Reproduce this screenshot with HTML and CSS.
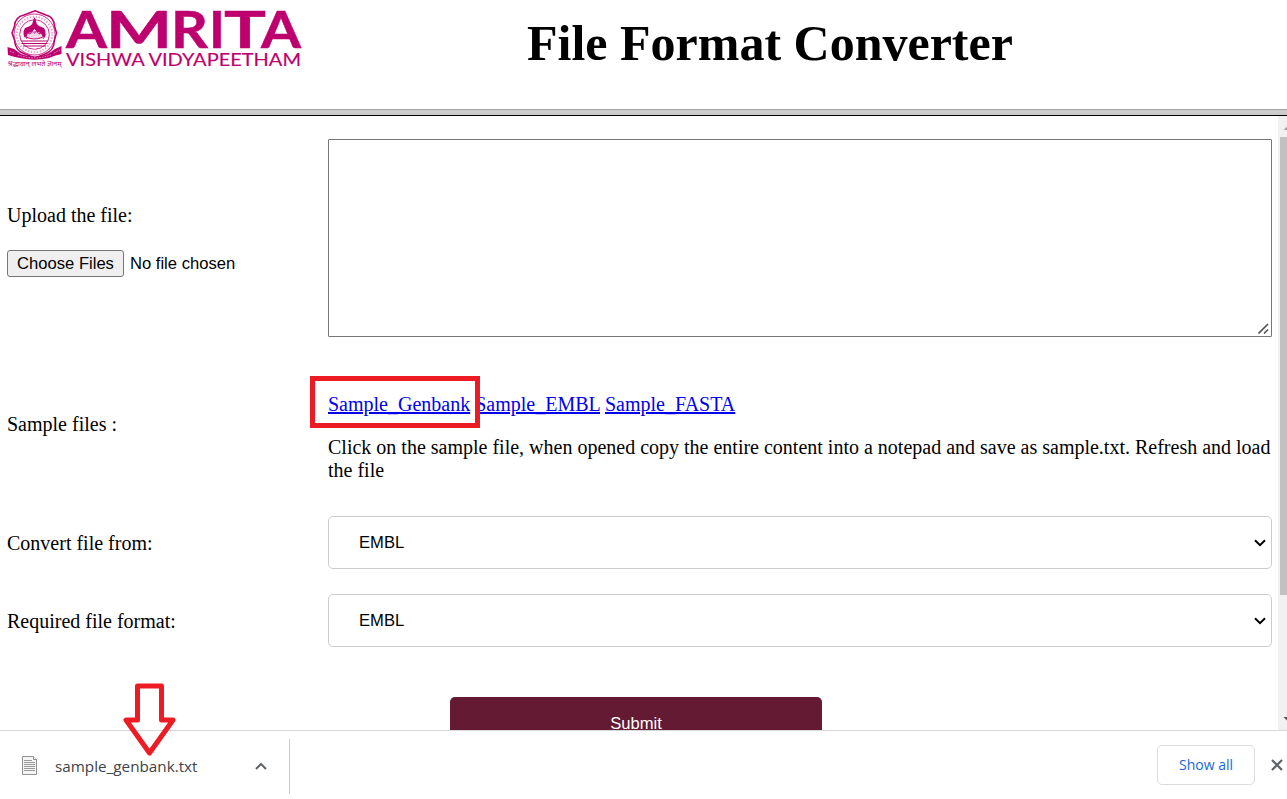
FILE: index.html
```html
<!DOCTYPE html>
<html lang="en">
<head>
<meta charset="utf-8">
<title>File Format Converter</title>
<link rel="stylesheet" href="styles.css">
</head>
<body>
<header class="header">
  <svg class="logo" width="303" height="74" viewBox="0 0 303 74" role="img" aria-label="Amrita Vishwa Vidyapeetham">
    <g fill="none" stroke="#bd006e">
      <path d="M35 10.800L46 15Q54 17 54.500 26L56.500 33L54.500 40Q54 51 45 54L35 58L25 54Q15 51 14.500 40L12 33L14.500 26Q15 17 24 15Z" stroke-width="1.500"/>
      <circle cx="34.500" cy="34.500" r="20.500" stroke-width=".8"/>
      <circle cx="34.500" cy="34.500" r="14.800" stroke-width=".8"/>
      <circle cx="34.500" cy="34.500" r="17.700" stroke-width="2" stroke-dasharray="1.300 1.700" opacity=".4"/>
      <path d="M21 41H48M21.500 43.500H47.500M23 46H46" stroke-width="1.200"/>
      <path d="M27 39L24 34M31 39L30 32M35 39V31M39 39L40 32M43 39L46 34" stroke-width=".8"/>
    </g>
    <path d="M34.500 17L36 21Q36 24 39 26L44 28Q47 33 44 38Q41 31 37 32L34.500 29L32 32Q28 31 25 38Q22 33 25 28L30 26Q33 24 33 21Z" fill="#bd006e"/>
    <path d="M26 37Q27 32 30 34Q32 30 34.500 33Q37 30 39 34Q42 32 43 37Q34.500 41 26 37Z" fill="#f5d5e7" stroke="#bd006e" stroke-width=".9"/>
    <path d="M7.500 47L14 49L21 54Q34.500 59 48 54L55 49L61.500 46V54L54 56L49 58Q34.500 61.500 20 58L15 57L8 55Z" fill="#bd006e"/>
    <path d="M18 55Q34.500 61 51 55M10 51L15 53M54 53L60 50" fill="none" stroke="#fff" stroke-width="1" stroke-dasharray="1.500 1.200" opacity=".55"/>
    <text class="logo-motto" x="7.500" y="66" textLength="54" lengthAdjust="spacingAndGlyphs">श्रद्धावान् लभते ज्ञानम्</text>
    <text class="logo-name" y="48"><tspan x="66" textLength="41" lengthAdjust="spacingAndGlyphs">A</tspan><tspan x="106" textLength="66" lengthAdjust="spacingAndGlyphs">M</tspan><tspan x="171" textLength="37" lengthAdjust="spacingAndGlyphs">R</tspan><tspan x="209" textLength="16" lengthAdjust="spacingAndGlyphs">I</tspan><tspan x="224" textLength="42" lengthAdjust="spacingAndGlyphs">T</tspan><tspan x="261" textLength="40" lengthAdjust="spacingAndGlyphs">A</tspan></text>
    <text class="logo-sub" x="66" y="66" textLength="235" lengthAdjust="spacingAndGlyphs">VISHWA VIDYAPEETHAM</text>
  </svg>
  <h1 class="title">File Format Converter</h1>
</header>
<div class="divider"></div>
<div class="viewport">
  <main class="form">
    <div class="upload">
      <div class="label">Upload the file:</div>
      <div class="file-row"><button class="file-btn">Choose Files</button><span>No file chosen</span></div>
    </div>
    <div class="textbox">
      <svg class="grip" width="11" height="11" viewBox="0 0 11 11"><path d="M.500 10.500L10 1M6 10.500L10 6.500" stroke="#555" stroke-width="1.700"/></svg>
    </div>
    <div class="label samples-label">Sample files :</div>
    <div class="samples">
      <div class="links"><a class="marked" href="#">Sample_Genbank</a> <a href="#">Sample_EMBL</a> <a href="#">Sample_FASTA</a></div>
      <p class="hint">Click on the sample file, when opened copy the entire content into a notepad and save as sample.txt. Refresh and load<br>the file</p>
    </div>
    <div class="label">Convert file from:</div>
    <div class="select"><span>EMBL</span><svg width="12" height="8" viewBox="0 0 12 8"><path d="M1 1.200L6 6.200L11 1.200" fill="none" stroke="#000" stroke-width="2"/></svg></div>
    <div class="label format-row">Required file format:</div>
    <div class="select format-row"><span>EMBL</span><svg width="12" height="8" viewBox="0 0 12 8"><path d="M1 1.200L6 6.200L11 1.200" fill="none" stroke="#000" stroke-width="2"/></svg></div>
    <button class="submit">Submit</button>
  </main>
  <div class="scrollbar">
    <svg width="9" height="21" viewBox="0 0 9 21"><path d="M5.500 14L9 10.500V14Z" fill="#a3a3a3"/></svg>
    <div class="thumb"></div>
    <svg class="scroll-down" width="9" height="17" viewBox="0 0 9 17"><path d="M5.500 4H9V7.500Z" fill="#505050"/></svg>
  </div>
</div>
<footer class="downloads">
  <div class="item">
    <svg class="file-icon" width="16" height="19" viewBox="0 0 16 19"><path d="M.500.500H11.500L14.500 3.500V18.500H.500Z" fill="#f5f5f5" stroke="#909090"/><path d="M11.500.500V3.500H14.500" fill="#fff" stroke="#909090"/><path d="M2 4.500H10M2 6.500H13M2 8.500H13M2 10.500H13M2 12.500H13M2 14.500H13" stroke="#999"/></svg>
    <span class="file-name">sample_genbank.txt</span>
    <svg class="chevron" width="12" height="8" viewBox="0 0 12 8"><path d="M1 7L6 2L11 7" fill="none" stroke="#5f6368" stroke-width="2"/></svg>
  </div>
  <button class="show-all">Show all</button>
  <svg class="close" width="12" height="12" viewBox="0 0 12 12"><path d="M1 1L11 11M11 1L1 11" stroke="#5f6368" stroke-width="2.200"/></svg>
</footer>
<svg class="arrow" width="54" height="75" viewBox="0 0 54 75"><path d="M14.500 3H38.500V37H50L26.500 70L3 37H14.500Z" fill="none" stroke="#ed1c24" stroke-width="5" stroke-linejoin="round"/></svg>
</body>
</html>
```

FILE: styles.css
```css
* { box-sizing: border-box; }
body { margin: 0; height: 799px; overflow: hidden; display: flex; flex-direction: column; background: #fff; color: #000; font-family: "Liberation Serif", serif; font-size: 20px; }
button { font-family: inherit; margin: 0; }
.header { height: 109px; flex: none; display: flex; align-items: flex-start; }
.logo { display: block; flex: none; overflow: visible; }
.logo-motto { font: 7px "Noto Sans", sans-serif; fill: #bd006e; }
.logo-name { font: 700 52px Lato, sans-serif; fill: #bd006e; stroke: #bd006e; stroke-width: .5px; }
.logo-sub { font: 17px Lato, sans-serif; fill: #bd006e; stroke: #bd006e; stroke-width: .15px; }
.title { margin: 15px 0 0 224px; font-size: 50px; line-height: 56px; white-space: nowrap; }
.divider { height: 7px; flex: none; background: #ccc; border-top: 1px solid #a5a5a5; border-bottom: 1px solid #000; }
.viewport { height: 614px; flex: none; display: flex; overflow: hidden; }
.form { width: 1278px; flex: none; padding: 23px 6px 0 7px; display: grid; grid-template-columns: 321px 944px; grid-template-rows: 198px 179px 53px 25px 53px 50px 53px; align-items: center; }
.format-row { grid-row: 5; }
.label { padding-top: 1px; line-height: 23px; white-space: nowrap; }
.upload { align-self: start; margin-top: 49px; padding-top: 16px; }
.upload .label { padding-top: 0; }
.file-row { display: flex; align-items: center; gap: 6px; margin-top: 23px; font: 16.600px "Liberation Sans", sans-serif; white-space: nowrap; }
.file-btn { width: 117px; height: 27px; padding: 0; border: 1px solid #767676; border-radius: 3px; background: #efefef; color: #000; font-size: 16.600px; }
.textbox { height: 198px; border: 1px solid #767676; border-radius: 1px; display: flex; align-items: flex-end; justify-content: flex-end; padding: 2px; }
.samples-label { padding-bottom: 6px; }
.samples { align-self: start; padding-top: 56px; }
.links { line-height: 23px; white-space: nowrap; color: #00e; }
.links a { color: #00e; text-decoration: underline; text-decoration-thickness: 2px; }
.marked { position: relative; }
.marked::after { content: ""; position: absolute; box-sizing: border-box; left: -18px; top: -17px; width: 170px; height: 52px; border: 5px solid #ed1c24; z-index: 1; }
.hint { margin: 20px 0 0; line-height: 23px; white-space: nowrap; }
.select { height: 53px; border: 1px solid #ccc; border-radius: 5px; padding: 0 5px 0 30px; display: flex; align-items: center; justify-content: space-between; font: 16.600px "Liberation Sans", sans-serif; }
.submit { grid-row: 7; grid-column: 1 / 3; width: 372px; height: 53px; margin-left: 443px; border: 0; border-radius: 5px; background: #651a34; color: #fff; font: 16.600px "Liberation Sans", sans-serif; }
.scrollbar { width: 9px; background: #f1f1f1; display: flex; flex-direction: column; }
.thumb { height: 458px; margin-left: 2px; background: #c1c1c1; }
.scroll-down { margin-top: auto; }
.downloads { height: 69px; flex: none; display: flex; align-items: center; border-top: 1px solid #d9d9db; background: #fff; font-family: "Open Sans", "Noto Sans", sans-serif; }
.item { width: 290px; height: 55px; margin-top: 3px; display: flex; align-items: center; border-right: 1px solid #ccc; padding-left: 22px; }
.file-icon { margin-top: -3px; }
.file-name { margin: -2px 0 0 17px; width: 143px; color: #404347; font-size: 15.250px; white-space: nowrap; }
.chevron { margin: -2px 0 0 57px; }
.show-all { width: 98px; height: 40px; margin-left: auto; border: 1px solid #dadce0; border-radius: 5px; background: #fff; color: #1a66dc; font-size: 14px; font-weight: 500; padding: 0 0 2px; }
.close { margin: 0 4px 0 16px; }
.arrow { position: absolute; left: 123px; top: 683px; }
```
